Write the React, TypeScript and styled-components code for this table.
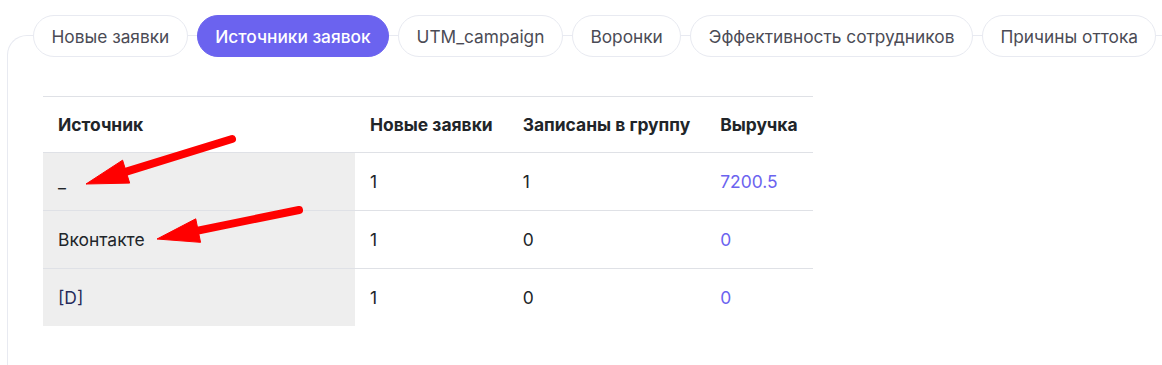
import React from "react"
import styled, { createGlobalStyle } from "styled-components"

const GlobalStyle = createGlobalStyle`
  body {
    margin: 0;
    background: #fff;
    font-family: Inter, "Noto Sans", sans-serif;
    color: #212529;
  }
`

const Page = styled.div`
  padding: 35px 0 0 7px;
  height: 365px;
  box-sizing: border-box;
  overflow: hidden;
`

const Panel = styled.div`
  position: relative;
  border-top: 1px solid #e8eaf1;
  border-left: 1px solid #e8eaf1;
  border-top-left-radius: 20px;
  height: 400px;
`

const TabsRow = styled.div`
  display: flex;
  gap: 9px;
  margin: -21px 0 0 25px;
`

const Tab = styled.div<{ active?: boolean }>`
  height: 42px;
  box-sizing: border-box;
  padding: 0 17.5px;
  display: flex;
  align-items: center;
  border-radius: 21px;
  font-size: 17.3px;
  white-space: nowrap;
  border: 1px solid ${(p) => (p.active ? "#6b63ef" : "#e8eaf1")};
  background: ${(p) => (p.active ? "#6b63ef" : "#fff")};
  color: ${(p) => (p.active ? "#fff" : "#4b4b55")};
  font-weight: ${(p) => (p.active ? 500 : 400)};
`

const TableWrap = styled.div`
  padding: 39px 0 0 35px;
`

const Table = styled.table`
  border-collapse: collapse;
  font-size: 17.45px;
  border-top: 1px solid #dfe1e6;

  th,
  td {
    height: 57px;
    padding: 0 15px;
    text-align: left;
    white-space: nowrap;
    border-bottom: 1px solid #dfe1e6;
  }

  th {
    height: 55px;
    font-weight: 700;
    color: #212529;
  }

  tr:last-child td {
    border-bottom: none;
  }
`

const SourceCell = styled.td<{ link?: boolean }>`
  width: 282px;
  background: #eeeeee;
  color: ${(p) => (p.link ? "#26295a" : "#212529")};
`

const Revenue = styled.td`
  color: #6b63ef;
`

const Arrows = styled.svg`
  position: absolute;
  left: -8px;
  top: -36px;
  pointer-events: none;
`

const tabs = [
  "Новые заявки",
  "Источники заявок",
  "UTM_campaign",
  "Воронки",
  "Эффективность сотрудников",
  "Причины оттока",
]

const rows = [
  { source: "_", fresh: 1, joined: 1, revenue: "7200.5" },
  { source: "Вконтакте", fresh: 1, joined: 0, revenue: "0" },
  { source: "[D]", fresh: 1, joined: 0, revenue: "0", link: true },
]

function Arrow({ x1, y1, x2, y2 }: { x1: number; y1: number; x2: number; y2: number }) {
  const dx = x2 - x1
  const dy = y2 - y1
  const len = Math.sqrt(dx * dx + dy * dy)
  const ux = dx / len
  const uy = dy / len
  const headLen = 42
  const half = 12
  const bx = x2 - ux * headLen
  const by = y2 - uy * headLen
  const px = -uy
  const py = ux
  const pts = `${x2},${y2} ${bx + px * half},${by + py * half} ${bx - px * half},${by - py * half}`
  return (
    <g fill="#ff0000" stroke="#ff0000">
      <line x1={x1} y1={y1} x2={bx + ux * 4} y2={by + uy * 4} strokeWidth={8} strokeLinecap="round" />
      <polygon points={pts} strokeWidth={1} strokeLinejoin="round" />
    </g>
  )
}

export default function App() {
  return (
    <Page>
      <GlobalStyle />
      <Panel>
        <TabsRow>
          {tabs.map((t, i) => (
            <Tab key={t} active={i === 1}>
              {t}
            </Tab>
          ))}
        </TabsRow>
        <TableWrap>
          <Table>
            <thead>
              <tr>
                <th style={{ width: 282 }}>Источник</th>
                <th>Новые заявки</th>
                <th>Записаны в группу</th>
                <th>Выручка</th>
              </tr>
            </thead>
            <tbody>
              {rows.map((r) => (
                <tr key={r.source}>
                  <SourceCell link={r.link}>{r.source}</SourceCell>
                  <td>{r.fresh}</td>
                  <td>{r.joined}</td>
                  <Revenue>{r.revenue}</Revenue>
                </tr>
              ))}
            </tbody>
          </Table>
        </TableWrap>
        <Arrows width={1162} height={365} viewBox="0 0 1162 365">
          <Arrow x1={232} y1={139} x2={86} y2={184} />
          <Arrow x1={299} y1={210} x2={157} y2={239} />
        </Arrows>
      </Panel>
    </Page>
  )
}
